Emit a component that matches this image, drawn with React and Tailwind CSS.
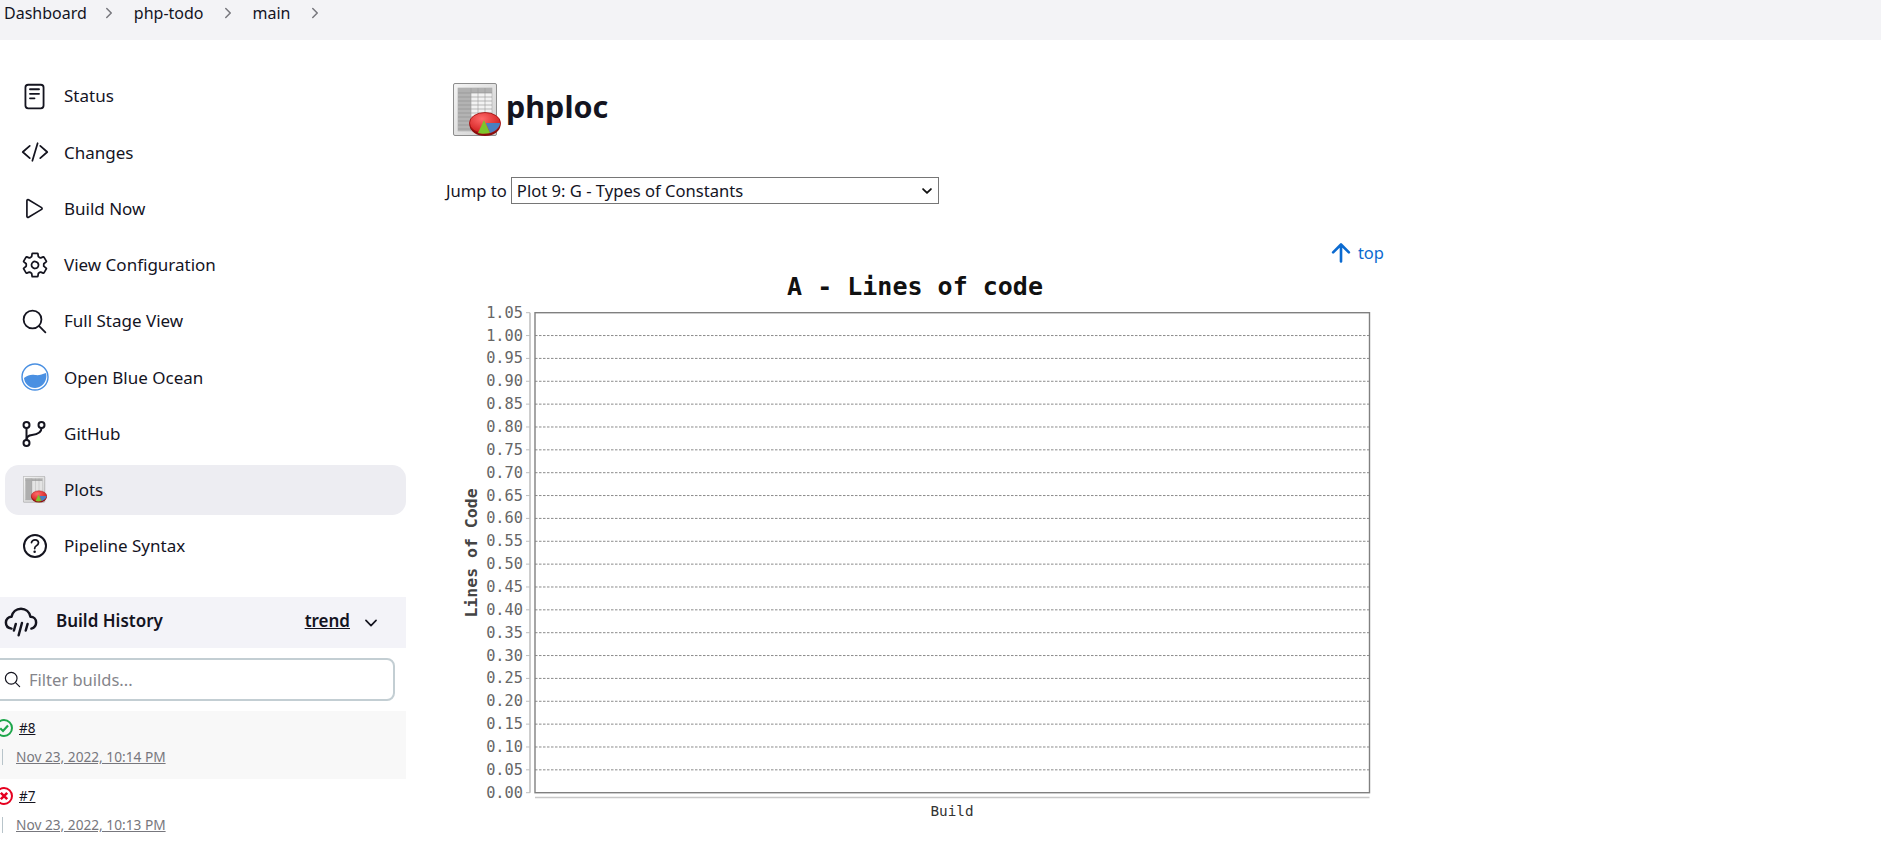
import React from "react";
import {
  IoReaderOutline, IoCodeSlashOutline, IoPlayOutline, IoSettingsOutline, IoSearchOutline,
  IoHelpCircleOutline, IoChevronDownOutline, IoChevronForwardOutline, IoArrowUpOutline,
} from "react-icons/io5";

const FONT = "font-['Noto_Sans','Open_Sans',sans-serif]";

function PlotIcon({ size, id }) {
  return (
    <svg width={(size * 48) / 54} height={size} viewBox="0 0 48 54" className="shrink-0">
      <defs>
        <linearGradient id={`sheet${id}`} x1="0" y1="0" x2="1" y2="1">
          <stop offset="0" stopColor="#f4f4f4" />
          <stop offset="1" stopColor="#cfcfcf" />
        </linearGradient>
        <radialGradient id={`pie${id}`} cx="0.4" cy="0.3" r="0.8">
          <stop offset="0" stopColor="#ff6a6a" />
          <stop offset="1" stopColor="#c81010" />
        </radialGradient>
      </defs>
      <rect x="0.5" y="0.5" width="43" height="52" rx="1.5" fill={`url(#sheet${id})`} stroke="#8d8d8d" />
      <rect x="5" y="5" width="34" height="43" fill="#f2f2f2" stroke="#aaa" strokeWidth="0.6" />
      <rect x="5" y="5" width="13" height="43" fill="#b3b3b3" />
      <rect x="5" y="5" width="34" height="5" fill="#b0b0b0" />
      {[10, 14, 18, 22, 26, 30, 34, 38, 42, 46].map((y) => (
        <line key={y} x1="5" x2="39" y1={y} y2={y} stroke="#8f8f8f" strokeWidth="0.6" />
      ))}
      {[18, 25, 32].map((x) => (
        <line key={x} x1={x} x2={x} y1="5" y2="48" stroke="#9a9a9a" strokeWidth="0.6" />
      ))}
      <ellipse cx="32" cy="42" rx="15.5" ry="11" fill="#8a0d0d" />
      <ellipse cx="32" cy="40" rx="15.5" ry="10.5" fill={`url(#pie${id})`} stroke="#9e0f0f" strokeWidth="0.8" />
      <path d="M33 40 L47 40 C47 45 41 49 37 50 Z" fill="#4a7fc0" />
      <path d="M31 37 L25 50 C28 51 33 51 37 50 Z" fill="#7cc52c" />
    </svg>
  );
}

function OceanIcon() {
  return (
    <svg width="28" height="28" viewBox="0 0 28 28" className="shrink-0">
      <circle cx="14" cy="14" r="13" fill="#fff" stroke="#4a90e2" strokeWidth="1.4" />
      <path d="M3 15 C7 12 10 11.5 14 12 C18 12.6 21 11.5 25 10 C25.6 12 25.5 14 25 16 C23.6 21.5 19 25 14 25 C8 25 3.5 20.5 3 15 Z" fill="#4a90e2" />
    </svg>
  );
}

function BranchIcon() {
  return (
    <svg width="26" height="26" viewBox="0 0 26 26" fill="none" stroke="#14141f" strokeWidth="2" className="shrink-0">
      <circle cx="4.5" cy="4" r="3" />
      <circle cx="4.5" cy="22" r="3" />
      <circle cx="19.5" cy="4" r="3" />
      <path d="M4.5 7 V19" />
      <path d="M19.5 7 C19.5 12 15 13.5 10 14 C7 14.3 4.5 15.5 4.5 19" />
    </svg>
  );
}

function RainCloud() {
  return (
    <svg width="34" height="34" viewBox="0 0 36 36" fill="none" stroke="#14141f" strokeWidth="2.6" strokeLinecap="round" strokeLinejoin="round" className="shrink-0">
      <path d="M8 25 C4.5 24.5 2 22 2 18.5 C2 15 4.8 12.5 8 12.5 C9 7.5 13 4 18 4 C23 4 27 7.5 28 12.5 C31.5 12.5 34 15 34 18.5 C34 21.5 32 24 29 25" />
      <path d="M12.5 20 L10.5 27" />
      <path d="M19 19 L15.5 32" />
      <path d="M25 20 L23 27" />
    </svg>
  );
}

const nav = [
  ["Status", <IoReaderOutline size={29} />],
  ["Changes", <IoCodeSlashOutline size={28} />],
  ["Build Now", <IoPlayOutline size={27} />],
  ["View Configuration", <IoSettingsOutline size={28} />],
  ["Full Stage View", <IoSearchOutline size={29} />],
  ["Open Blue Ocean", <OceanIcon />],
  ["GitHub", <BranchIcon />],
  ["Plots", <PlotIcon size={27} id="a" />, true],
  ["Pipeline Syntax", <IoHelpCircleOutline size={32} />],
];

function StatusBall({ ok }) {
  const c = ok ? "#1ea64b" : "#e6001f";
  return (
    <svg width="18" height="18" viewBox="0 0 18 18" className="shrink-0" fill="none">
      <circle cx="9" cy="9" r="8" stroke={c} strokeWidth="2" />
      {ok ? (
        <path d="M5.2 9.2 L8 12 L13 6.4" stroke={c} strokeWidth="2.2" />
      ) : (
        <path d="M5.8 5.8 L12.2 12.2 M12.2 5.8 L5.8 12.2" stroke={c} strokeWidth="2.6" />
      )}
    </svg>
  );
}

function Row({ ok, n, date, bg }) {
  return (
    <div className={`h-[68px] flex flex-col pt-[7px] ${bg}`}>
      <div className="flex items-center -ml-[5px] gap-[6px] h-[20px]">
        <StatusBall ok={ok} />
        <a className="text-[13.5px] underline text-[#14141f] leading-[20px]">{n}</a>
      </div>
      <div className="flex items-center mt-[9px] h-[20px]">
        <div className="w-px h-[16px] bg-[#b8c4ca] ml-[2px] mr-[13px]" />
        <a className="text-[13.7px] underline text-[#77777d] leading-[20px] whitespace-nowrap">{date}</a>
      </div>
    </div>
  );
}

function Chart() {
  const ticks = Array.from({ length: 22 }, (_, i) => i);
  const L = 89, R = 923.5, T = 52.7, B = 532.7;
  const step = (B - T) / 21;
  const mono = "'DejaVu Sans Mono', monospace";
  return (
    <svg width="950" height="587" viewBox="0 0 950 587" className="block">
      <text x="469" y="35" textAnchor="middle" fontFamily={mono} fontWeight="700" fontSize="25" fill="#111">A - Lines of code</text>
      <text transform="translate(31 293) rotate(-90)" textAnchor="middle" fontFamily={mono} fontWeight="700" fontSize="16.5" fill="#444">Lines of Code</text>
      <line x1="84" x2="84" y1={T} y2={B} stroke="#bdbdbd" strokeWidth="1.5" />
      {ticks.map((i) => {
        const y = B - i * step;
        return (
          <g key={i}>
            <text x="77" y={y + 5} textAnchor="end" fontFamily={mono} fontSize="15.3" fill="#666">{(i * 0.05).toFixed(2)}</text>
            <line x1="80" x2="84" y1={y} y2={y} stroke="#bdbdbd" />
            {i > 0 && i < 21 && <line x1={L} x2={R} y1={y} y2={y} stroke="#8a8a8a" strokeDasharray="2.5 1.5" />}
          </g>
        );
      })}
      <rect x={L} y={T} width={R - L} height={B - T} fill="none" stroke="#808080" strokeWidth="1.4" />
      <line x1={L} x2={R} y1="537.5" y2="537.5" stroke="#c8c8c8" strokeWidth="1.5" />
      <text x="506" y="556" textAnchor="middle" fontFamily={mono} fontSize="14.3" fill="#333">Build</text>
    </svg>
  );
}

export default function App() {
  return (
    <div className={`${FONT} w-[1881px] h-[847px] overflow-hidden bg-white text-[#14141f]`}>
      <header className="h-[40px] bg-[#f3f3f6] flex items-start pl-[4px] text-[16px] leading-[26px]">
        <span>Dashboard</span>
        <IoChevronForwardOutline size={16} className="ml-[14px] mr-[17px] mt-[5px] text-[#77777d]" />
        <span>php-todo</span>
        <IoChevronForwardOutline size={16} className="ml-[16px] mr-[17px] mt-[5px] text-[#77777d]" />
        <span>main</span>
        <IoChevronForwardOutline size={16} className="ml-[16px] mt-[5px] text-[#77777d]" />
      </header>
      <div className="flex">
        <aside className="w-[406px] shrink-0 pt-[31px]">
          <nav className="flex flex-col gap-[6.25px] pl-[5px]">
            {nav.map(([label, icon, active]) => (
              <div key={label} className={`h-[50px] flex items-center rounded-[14px] text-[17px] ${active ? "bg-[#ededf2]" : ""}`}>
                <span className="w-[59px] flex justify-center shrink-0">{icon}</span>
                <span>{label}</span>
              </div>
            ))}
          </nav>
          <div className="mt-[26px] h-[51px] bg-[#f3f3f8] flex items-center">
            <div className="ml-[4px] -mt-[1px] flex"><RainCloud /></div>
            <span className="ml-[18px] -mt-[3px] font-semibold text-[17px]">Build History</span>
            <span className="ml-auto -mt-[3px] font-semibold text-[17px] underline">trend</span>
            <IoChevronDownOutline size={18} className="ml-[12px] mr-[26px]" />
          </div>
          <div className="mt-[10px] h-[43px] -ml-[10px] w-[405px] border-2 border-[#c3ced3] rounded-[8px] flex items-center">
            <IoSearchOutline size={19} className="ml-[11px] shrink-0" />
            <span className="ml-[7px] pt-[2px] text-[16.5px] text-[#85858b]">Filter builds...</span>
          </div>
          <div className="mt-[10px]">
            <Row ok n="#8" date="Nov 23, 2022, 10:14 PM" bg="bg-[#f8f8f8]" />
            <Row n="#7" date="Nov 23, 2022, 10:13 PM" bg="bg-white" />
          </div>
        </aside>
        <main className="flex-1 pl-[40px] pt-[43px] min-w-0">
          <div className="flex items-center h-[54px] pl-[7px]">
            <PlotIcon size={54} id="b" />
            <h1 className="ml-[5px] -mt-[7px] font-bold text-[30.5px] leading-none">phploc</h1>
          </div>
          <div className="flex items-center mt-[40px] h-[27px] text-[16.6px]">
            <span className="pt-[2px]">Jump to</span>
            <div className="ml-[4px] w-[428px] h-[27px] border border-[#767676] flex items-center pl-[5px] pr-[4px] justify-between">
              <span className="leading-none pt-[2px]">Plot 9: G - Types of Constants</span>
              <IoChevronDownOutline size={14} className="text-[#111] [&_*]:stroke-[64]" />
            </div>
          </div>
          <div className="w-[938px] mt-[42px] flex justify-end items-center h-[14px] text-[#0b6ad0] text-[16.5px]">
            <IoArrowUpOutline size={28} />
            <span className="ml-[3px]">top</span>
          </div>
          <Chart />
        </main>
      </div>
    </div>
  );
}
